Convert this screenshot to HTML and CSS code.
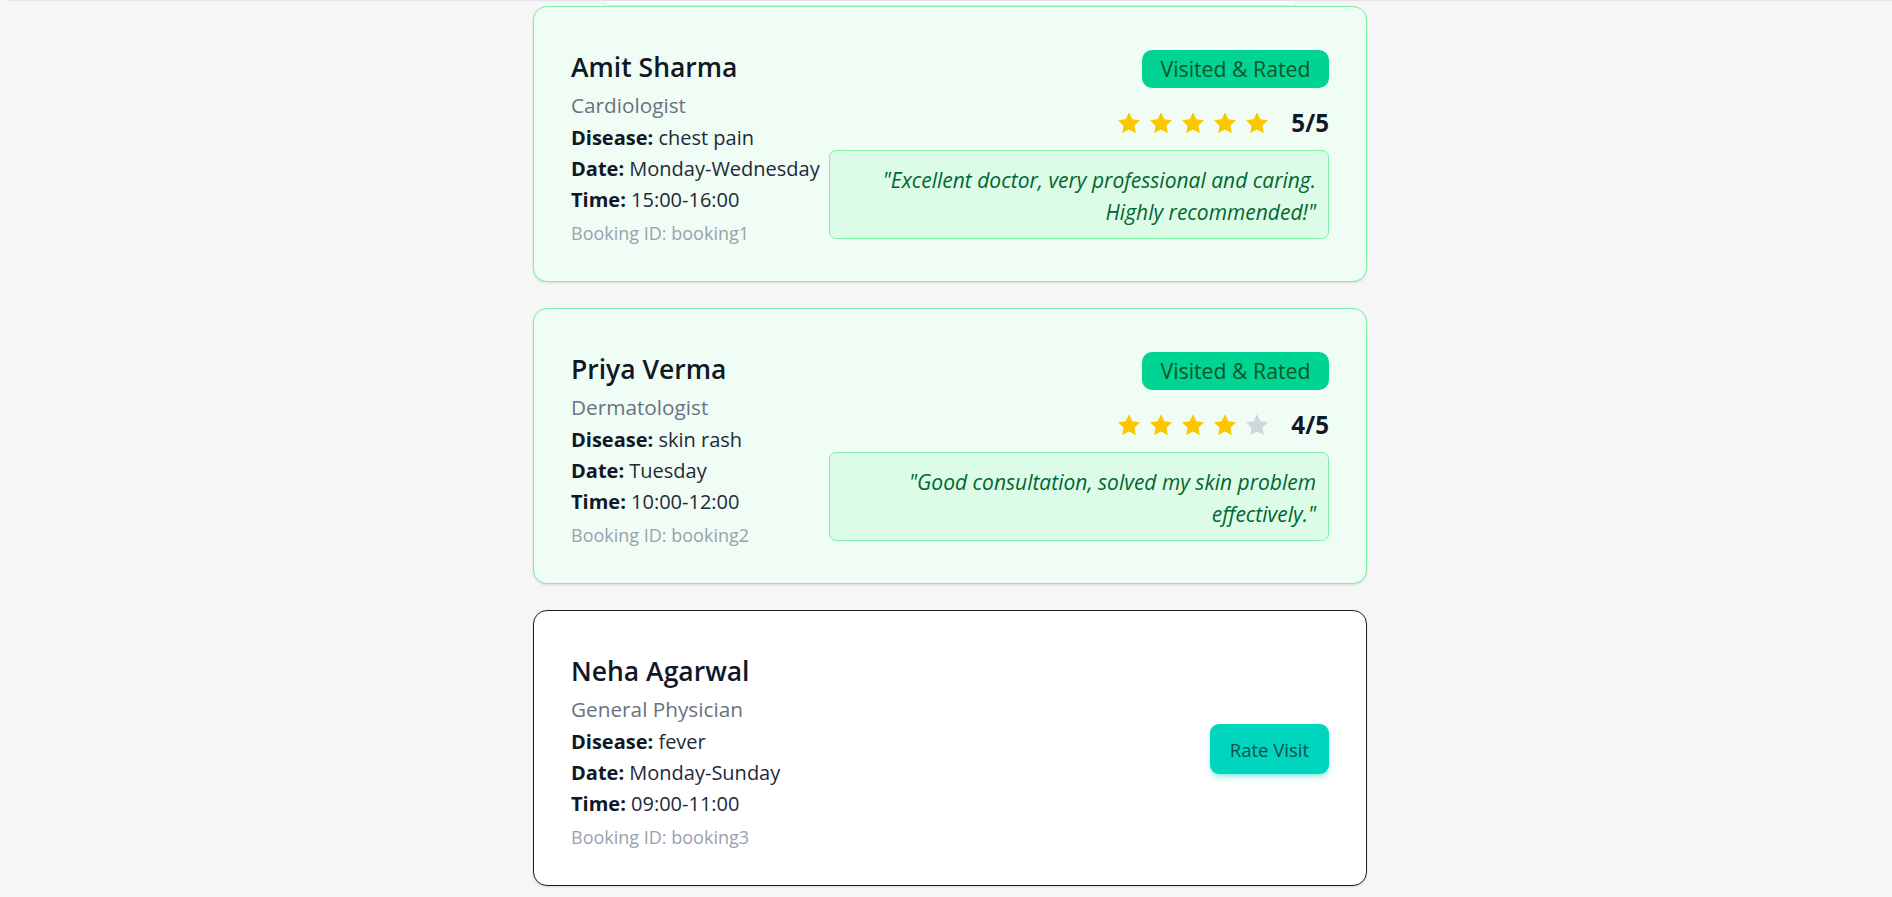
FILE: index.html
```html
<!DOCTYPE html>
<html lang="en">
<head>
<meta charset="utf-8">
<title>My Bookings</title>
<link rel="stylesheet" href="styles.css">
</head>
<body>
<div class="page">
  <div class="top-strip"><div class="prev-panel"></div></div>
  <div class="list">

    <div class="card card-rated">
      <div class="info">
        <h2 class="doc-name">Amit Sharma</h2>
        <p class="specialty">Cardiologist</p>
        <p class="line"><b>Disease:</b> chest pain</p>
        <p class="line"><b>Date:</b> Monday-Wednesday</p>
        <p class="line"><b>Time:</b> 15:00-16:00</p>
        <p class="booking">Booking ID: booking1</p>
      </div>
      <div class="side">
        <span class="badge">Visited &amp; Rated</span>
        <div class="rating">
          <div class="stars">
            <svg class="star on" viewBox="2 2 20 19.1"><polygon points="12,2 15.09,8.26 22,9.27 17,14.14 18.18,21.02 12,17.77 5.82,21.02 7,14.14 2,9.27 8.91,8.26"/></svg>
            <svg class="star on" viewBox="2 2 20 19.1"><polygon points="12,2 15.09,8.26 22,9.27 17,14.14 18.18,21.02 12,17.77 5.82,21.02 7,14.14 2,9.27 8.91,8.26"/></svg>
            <svg class="star on" viewBox="2 2 20 19.1"><polygon points="12,2 15.09,8.26 22,9.27 17,14.14 18.18,21.02 12,17.77 5.82,21.02 7,14.14 2,9.27 8.91,8.26"/></svg>
            <svg class="star on" viewBox="2 2 20 19.1"><polygon points="12,2 15.09,8.26 22,9.27 17,14.14 18.18,21.02 12,17.77 5.82,21.02 7,14.14 2,9.27 8.91,8.26"/></svg>
            <svg class="star on" viewBox="2 2 20 19.1"><polygon points="12,2 15.09,8.26 22,9.27 17,14.14 18.18,21.02 12,17.77 5.82,21.02 7,14.14 2,9.27 8.91,8.26"/></svg>
          </div>
          <span class="score">5/5</span>
        </div>
        <p class="review">"Excellent doctor, very professional and caring. Highly recommended!"</p>
      </div>
    </div>

    <div class="card card-rated">
      <div class="info">
        <h2 class="doc-name">Priya Verma</h2>
        <p class="specialty">Dermatologist</p>
        <p class="line"><b>Disease:</b> skin rash</p>
        <p class="line"><b>Date:</b> Tuesday</p>
        <p class="line"><b>Time:</b> 10:00-12:00</p>
        <p class="booking">Booking ID: booking2</p>
      </div>
      <div class="side">
        <span class="badge">Visited &amp; Rated</span>
        <div class="rating">
          <div class="stars">
            <svg class="star on" viewBox="2 2 20 19.1"><polygon points="12,2 15.09,8.26 22,9.27 17,14.14 18.18,21.02 12,17.77 5.82,21.02 7,14.14 2,9.27 8.91,8.26"/></svg>
            <svg class="star on" viewBox="2 2 20 19.1"><polygon points="12,2 15.09,8.26 22,9.27 17,14.14 18.18,21.02 12,17.77 5.82,21.02 7,14.14 2,9.27 8.91,8.26"/></svg>
            <svg class="star on" viewBox="2 2 20 19.1"><polygon points="12,2 15.09,8.26 22,9.27 17,14.14 18.18,21.02 12,17.77 5.82,21.02 7,14.14 2,9.27 8.91,8.26"/></svg>
            <svg class="star on" viewBox="2 2 20 19.1"><polygon points="12,2 15.09,8.26 22,9.27 17,14.14 18.18,21.02 12,17.77 5.82,21.02 7,14.14 2,9.27 8.91,8.26"/></svg>
            <svg class="star off" viewBox="2 2 20 19.1"><polygon points="12,2 15.09,8.26 22,9.27 17,14.14 18.18,21.02 12,17.77 5.82,21.02 7,14.14 2,9.27 8.91,8.26"/></svg>
          </div>
          <span class="score">4/5</span>
        </div>
        <p class="review">"Good consultation, solved my skin problem effectively."</p>
      </div>
    </div>

    <div class="card card-pending">
      <div class="info">
        <h2 class="doc-name">Neha Agarwal</h2>
        <p class="specialty">General Physician</p>
        <p class="line"><b>Disease:</b> fever</p>
        <p class="line"><b>Date:</b> Monday-Sunday</p>
        <p class="line"><b>Time:</b> 09:00-11:00</p>
        <p class="booking">Booking ID: booking3</p>
      </div>
      <button class="rate-btn">Rate Visit</button>
    </div>

  </div>
</div>
</body>
</html>
```
FILE: styles.css
```css
* { box-sizing: border-box; }

html, body {
  margin: 0;
  padding: 0;
  background: #f6f6f6;
}

body {
  font-family: "Open Sans", "Noto Sans", sans-serif;
  color: #101828;
}

.page {
  padding-left: 8px;
  height: 897px;
  overflow: hidden;
}

.top-strip {
  border-top: 1px solid #e6e2ea;
  display: flex;
  justify-content: center;
}

.prev-panel {
  width: 689px;
  height: 4px;
  background: #ffffff;
  border-radius: 0 0 16px 16px;
  box-shadow: 0 2px 6px rgba(0, 0, 0, 0.15);
}

.list {
  width: 834px;
  margin: 1px auto 0;
  display: flex;
  flex-direction: column;
  gap: 26px;
}

.card {
  display: flex;
  justify-content: space-between;
  align-items: flex-start;
  padding: 43px 37px 26px;
  border-radius: 14px;
  border: 1px solid #7bf1a8;
  box-shadow: 0 1px 3px rgba(0, 0, 0, 0.08), 0 1px 2px rgba(0, 0, 0, 0.05);
  height: 276px;
}

.card-rated {
  background: #f0fdf4;
}

.card-pending {
  background: #ffffff;
  border-color: #1e1e1e;
}

.info {
  flex: 1 1 auto;
  min-width: 0;
  white-space: nowrap;
}

.info p, .info h2 { margin: 0; }

.doc-name {
  font-size: 26.5px;
  font-weight: 600;
  line-height: 35px;
  color: #101828;
}

.specialty {
  font-size: 20.75px;
  line-height: 30px;
  margin: 5px 0 2px !important;
  color: #6a7282;
}

.line {
  font-size: 20px;
  line-height: 31px;
  color: #1e2939;
}

.line b {
  font-weight: 700;
  color: #101828;
}

.booking {
  font-size: 18px;
  line-height: 25px;
  margin-top: 5.5px !important;
  color: #99a1af;
}

.side {
  flex: 0 0 500px;
  width: 500px;
  display: flex;
  flex-direction: column;
  align-items: flex-end;
}

.badge {
  display: inline-block;
  height: 38px;
  line-height: 38px;
  padding: 0 18.5px;
  font-size: 21.25px;
  color: #0d542b;
  background: #00d492;
  border-radius: 10px;
  white-space: nowrap;
}

.rating {
  margin-top: 18px;
  height: 33px;
  display: flex;
  align-items: center;
}

.stars {
  display: flex;
  gap: 10px;
  align-items: center;
}

.star {
  width: 22px;
  height: 21.5px;
  display: block;
}

.star.on { fill: #fdc700; }
.star.off { fill: #d1d5dc; }

.score {
  margin-left: 23px;
  font-size: 24.2px;
  font-weight: 700;
  line-height: 33px;
  color: #101828;
}

.review {
  margin: 11px 0 0;
  width: 500px;
  padding: 14px 12px 10px;
  border: 1px solid #7bf1a8;
  border-radius: 7px;
  background: #dcfce7;
  color: #016630;
  font-style: italic;
  font-size: 21px;
  line-height: 31.7px;
  text-align: right;
}

.rate-btn {
  align-self: center;
  margin-bottom: 15px;
  height: 50px;
  padding: 0 20px;
  border: none;
  border-radius: 9px;
  background: #00d5be;
  color: #0b4f4a;
  font-family: "Open Sans", "Noto Sans", sans-serif;
  font-size: 18.5px;
  font-weight: 500;
  box-shadow: 0 4px 6px -1px rgba(0, 213, 190, 0.35), 0 2px 4px -2px rgba(0, 213, 190, 0.35);
  cursor: pointer;
}
```
